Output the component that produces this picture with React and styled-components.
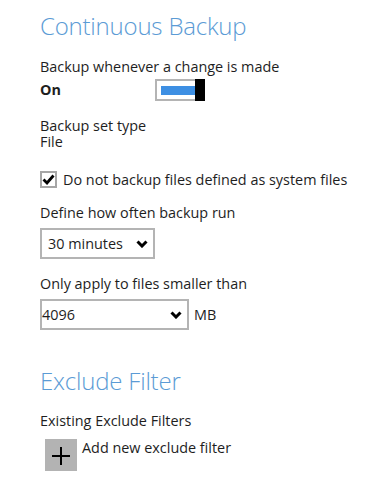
import React, { useState } from "react";
import styled, { createGlobalStyle } from "styled-components";

const GlobalStyle = createGlobalStyle`
	body {
		margin: 0;
		background: #fff;
		font-family: "Open Sans", "Liberation Sans", sans-serif;
		color: #1e1e1e;
	}
`;

export default function App() {
	const [on, setOn] = useState(true);
	const [skipSystem, setSkipSystem] = useState(true);

	return (
		<Page>
			<GlobalStyle />
			<Title>Continuous Backup</Title>
			<Field $top={16}>
				<Text>Backup whenever a change is made</Text>
				<ToggleRow>
					<Bold>{on ? "On" : "Off"}</Bold>
					<Toggle onClick={() => setOn(!on)}>
						<Track>
							<Fill $on={on} />
						</Track>
						<Knob />
					</Toggle>
				</ToggleRow>
			</Field>
			<Field $top={17}>
				<Text>Backup set type</Text>
				<Text>File</Text>
			</Field>
			<CheckRow onClick={() => setSkipSystem(!skipSystem)}>
				<Box>
					{skipSystem && (
						<svg width="13" height="11" viewBox="0 0 13 11">
							<path
								d="M1.5 5.5 L5 9 L11.5 1.5"
								fill="none"
								stroke="#000"
								strokeWidth="2.8"
							/>
						</svg>
					)}
				</Box>
				<Text>Do not backup files defined as system files</Text>
			</CheckRow>
			<Field $top={17}>
				<Text>Define how often backup run</Text>
				<Select $width={115} $padLeft={6}>
					<Text>30 minutes</Text>
					<Chevron />
				</Select>
			</Field>
			<Field $top={17}>
				<Text>Only apply to files smaller than</Text>
				<SelectRow>
					<Select $width={149} $padLeft={0}>
						<Text>4096</Text>
						<Chevron />
					</Select>
					<Text>MB</Text>
				</SelectRow>
			</Field>
			<Title $top={34}>Exclude Filter</Title>
			<Field $top={15}>
				<Text>Existing Exclude Filters</Text>
				<AddRow>
					<PlusButton>
						<svg width="18" height="18" viewBox="0 0 18 18">
							<path d="M0 9 H18 M9 0 V18" stroke="#000" strokeWidth="2" />
						</svg>
					</PlusButton>
					<Text>Add new exclude filter</Text>
				</AddRow>
			</Field>
		</Page>
	);
}

function Chevron() {
	return (
		<svg width="12" height="8" viewBox="0 0 12 8">
			<path d="M1.5 1.5 L6 6 L10.5 1.5" fill="none" stroke="#000" strokeWidth="3" />
		</svg>
	);
}

const Page = styled.div`
	width: 390px;
	height: 490px;
	padding: 9px 0 0 40px;
	box-sizing: border-box;
	overflow: hidden;
`;
const Title = styled.h2`
	margin: ${(p) => p.$top || 0}px 0 0;
	font-size: 24px;
	font-weight: 300;
	line-height: 34px;
	letter-spacing: -0.2px;
	color: #5b9bd5;
`;
const Field = styled.div`
	margin-top: ${(p) => p.$top}px;
	display: flex;
	flex-direction: column;
`;
const Text = styled.span`
	font-size: 14.4px;
	line-height: 16px;
	white-space: nowrap;
`;
const Bold = styled(Text)`
	font-weight: 700;
	width: 115px;
`;
const ToggleRow = styled.div`
	display: flex;
	align-items: center;
	margin-top: 4px;
`;
const Toggle = styled.div`
	display: flex;
	width: 50px;
	height: 22px;
	cursor: pointer;
`;
const Track = styled.div`
	flex: 1;
	display: flex;
	align-items: center;
	border: 2px solid #b4b4b4;
	border-right: none;
	padding: 1px 0 0 4px;
`;
const Fill = styled.div`
	flex: 1;
	height: 9px;
	background: ${(p) => (p.$on ? "#3d8fe3" : "transparent")};
`;
const Knob = styled.div`
	width: 10px;
	background: #000;
`;
const CheckRow = styled.div`
	display: flex;
	align-items: center;
	gap: 6px;
	margin-top: 21px;
	cursor: pointer;
`;
const Box = styled.div`
	width: 17px;
	height: 17px;
	box-sizing: border-box;
	border: 2px solid #a6a6a6;
	display: flex;
	align-items: center;
	justify-content: center;
`;
const Select = styled.div`
	width: ${(p) => p.$width}px;
	height: 31px;
	box-sizing: border-box;
	border: 2px solid #b4b4b4;
	padding: 0 5px 0 ${(p) => p.$padLeft}px;
	display: flex;
	align-items: center;
	justify-content: space-between;
	margin-top: 7px;
`;
const SelectRow = styled.div`
	display: flex;
	align-items: center;
	gap: 5px;
	& > ${Text} {
		margin-top: 7px;
	}
`;
const AddRow = styled.div`
	display: flex;
	align-items: flex-start;
	gap: 5px;
	margin: 10px 0 0 5px;
`;
const PlusButton = styled.div`
	width: 32px;
	height: 32px;
	background: #b3b3b3;
	display: flex;
	align-items: center;
	justify-content: center;
	padding-top: 1px;
	box-sizing: border-box;
	& + ${Text} {
		margin-top: 1px;
	}
`;
